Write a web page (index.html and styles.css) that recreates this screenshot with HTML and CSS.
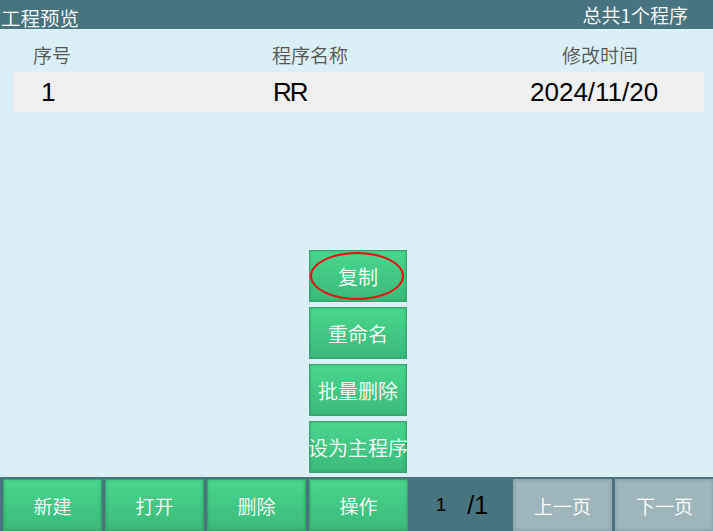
FILE: index.html
```html
<!DOCTYPE html>
<html lang="zh-CN">
<head>
<meta charset="utf-8">
<title>工程预览</title>
<link rel="stylesheet" href="styles.css">
</head>
<body>
<div class="screen">
  <header class="topbar">
    <span class="title">工程预览</span>
    <span class="count">总共1个程序</span>
  </header>
  <main class="content">
    <div class="grid head">
      <div class="c1">序号</div>
      <div class="c2">程序名称</div>
      <div class="c3">修改时间</div>
    </div>
    <div class="grid row">
      <div class="c1">1</div>
      <div class="c2">RR</div>
      <div class="c3">2024/11/20</div>
    </div>
    <div class="spacer"></div>
    <div class="menu">
      <button class="btn green menu-btn marked">复制<span class="ring"></span></button>
      <button class="btn green menu-btn">重命名</button>
      <button class="btn green menu-btn">批量删除</button>
      <button class="btn green menu-btn">设为主程序</button>
    </div>
  </main>
  <footer class="bottombar">
    <button class="btn green bar-btn">新建</button>
    <button class="btn green bar-btn">打开</button>
    <button class="btn green bar-btn">删除</button>
    <button class="btn green bar-btn">操作</button>
    <div class="pager"><span class="cur">1</span><span class="tot">/1</span></div>
    <button class="btn gray bar-btn">上一页</button>
    <button class="btn gray bar-btn">下一页</button>
  </footer>
</div>
</body>
</html>
```
FILE: styles.css
```css
html, body {
  margin: 0;
  padding: 0;
}
body {
  width: 713px;
  height: 531px;
  overflow: hidden;
  background: #daf0f6;
  font-family: "Noto Sans CJK SC", "Liberation Sans", sans-serif;
  font-weight: 350;
}
.screen {
  display: flex;
  flex-direction: column;
  height: 531px;
}
.topbar {
  height: 29px;
  background: #47747f;
  color: #ffffff;
  display: flex;
  justify-content: space-between;
  align-items: flex-end;
  padding: 0 25px 0 1px;
  font-size: 19px;
  line-height: 22px;
  box-sizing: border-box;
}
.topbar .title {
  font-size: 19.5px;
  line-height: 20px;
  padding-bottom: 1px;
}
.topbar .count {
  padding-bottom: 3px;
}
.content {
  flex: 1;
  display: flex;
  flex-direction: column;
}
.grid {
  display: grid;
  grid-template-columns: 247px 255px 189px;
  margin: 0 9px 0 13px;
}
.head {
  padding-top: 9px;
  height: 43px;
  box-sizing: border-box;
  line-height: 34px;
  font-size: 19px;
  color: #555555;
}
.head .c1 { padding-left: 20px; }
.head .c2 { padding-left: 12px; }
.head .c3 { padding-left: 47px; }
.row {
  background: #f0f0f0;
  height: 40px;
  line-height: 40px;
  font-family: "Liberation Sans", "Noto Sans CJK SC", sans-serif;
  font-weight: 400;
  font-size: 26px;
  color: #000000;
}
.row .c1 { padding-left: 28px; }
.row .c2 { padding-left: 13px; letter-spacing: -2px; }
.row .c3 { padding-left: 15px; }
.spacer {
  flex: 1;
}
.menu {
  display: flex;
  flex-direction: column;
  gap: 5px;
  margin: 0 0 4px 309px;
  width: 98px;
}
.btn {
  border: none;
  margin: 0;
  padding: 0;
  font-family: "Noto Sans CJK SC", sans-serif;
  font-weight: 350;
  font-size: 20px;
  color: #ffffff;
  white-space: nowrap;
  overflow: hidden;
  display: flex;
  align-items: center;
  justify-content: center;
  box-sizing: border-box;
}
.green {
  background: linear-gradient(#49d78e, #3bb97a);
  box-shadow: inset 0 0 0 1px #37a56c, inset 0 0 3px 1px rgba(20, 110, 60, 0.35);
}
.gray {
  background: #9db5bb;
  box-shadow: inset 0 0 0 1px #8ea7ae, inset 0 0 3px 1px rgba(60, 90, 100, 0.3);
}
.menu-btn {
  width: 98px;
  height: 52px;
}
.marked {
  position: relative;
  overflow: visible;
}
.ring {
  position: absolute;
  left: 1px;
  top: 2px;
  width: 94px;
  height: 48px;
  border: 2px solid #e81010;
  border-radius: 50%;
  box-sizing: border-box;
}
.bottombar {
  height: 54px;
  background: #47747f;
  display: flex;
  gap: 3px;
  padding: 2px 0 0 3px;
  box-sizing: border-box;
}
.bar-btn {
  width: 99px;
  height: 52px;
  flex: none;
  font-size: 19px;
}
.pager {
  width: 99px;
  flex: none;
  display: flex;
  align-items: center;
  justify-content: center;
  color: #000000;
  font-family: "Liberation Sans", sans-serif;
  font-weight: 400;
}
.pager .cur {
  font-size: 19px;
  margin-right: 21px;
  margin-left: 3px;
}
.pager .tot {
  font-size: 25px;
}
```
